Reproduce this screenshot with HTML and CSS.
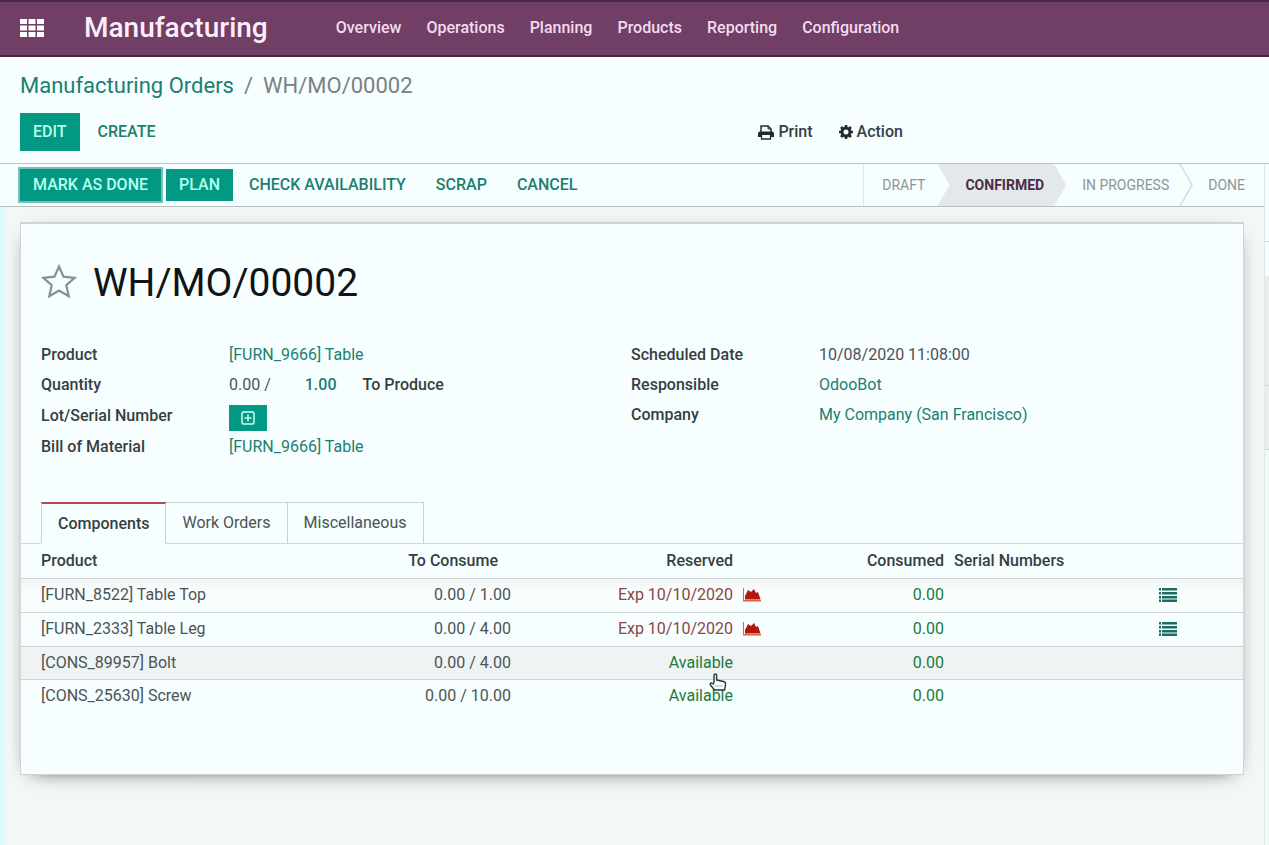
FILE: index.html
```html
<!DOCTYPE html>
<html lang="en">
<head>
<meta charset="utf-8">
<title>WH/MO/00002 - Manufacturing</title>
<link rel="stylesheet" href="styles.css">
</head>
<body>
<svg class="defs" aria-hidden="true">
  <symbol id="chart" viewBox="0 0 18 14"><path d="M0 0h1v12h17v1.500H0z" fill="#d8663c"/><path d="M2 11.500V8l3-6 3 2 3-3 2 4 2-1 2.500 7.500z" fill="#b3170f"/></symbol>
  <symbol id="list" viewBox="0 0 18 14"><path d="M0 0h2v2.500H0zM3 0h15v2.500H3zM0 4h2v2.500H0zM3 4h15v2.500H3zM0 8h2v2.500H0zM3 8h15v2.500H3zM0 11.500h2V14H0zM3 11.500h15V14H3z" fill="#1b6b62"/></symbol>
</svg>
<header class="navbar">
  <button class="apps" aria-label="Applications">
    <svg width="24" height="18" viewBox="0 0 24 18" fill="#fff"><path d="M0 0h7v5H0zM8.500 0h7v5h-7zM17 0h7v5h-7zM0 6.500h7v5H0zM8.500 6.500h7v5h-7zM17 6.500h7v5h-7zM0 13h7v5H0zM8.500 13h7v5h-7zM17 13h7v5h-7z"/></svg>
  </button>
  <a class="brand" href="#">Manufacturing</a>
  <nav class="menu">
    <a href="#">Overview</a><a href="#">Operations</a><a href="#">Planning</a><a href="#">Products</a><a href="#">Reporting</a><a href="#">Configuration</a>
  </nav>
</header>
<section class="control">
  <div class="crumbs"><a href="#">Manufacturing Orders</a><span>/</span><span>WH/MO/00002</span></div>
  <div class="tools">
    <div class="tools-left">
      <button class="btn primary edit">EDIT</button><button class="btn flat">CREATE</button>
    </div>
    <div class="tools-right">
      <button class="drop"><svg width="16" height="15" viewBox="0 0 16 15"><path d="M3 7V1h7l3 3v3" fill="none" stroke="#222c2e" stroke-width="1.500"/><path d="M10 1v3h3" fill="none" stroke="#222c2e"/><path d="M2 6.500h12q2 0 2 2V12h-3v-2H3v2H0V8.500q0-2 2-2z" fill="#222c2e"/><path d="M3.500 10v4h9v-4" fill="none" stroke="#222c2e" stroke-width="1.300"/></svg>Print</button>
      <button class="drop"><svg width="14" height="14" viewBox="0 0 14 14" fill="none" stroke="#222c2e"><circle cx="7" cy="7" r="4" stroke-width="3"/><path d="M7 0v2M7 12v2M0 7h2M12 7h2M2 2l1.500 1.500M10.500 10.500L12 12M12 2l-1.500 1.500M3.500 10.500L2 12" stroke-width="2.600"/></svg>Action</button>
    </div>
  </div>
</section>
<div class="content">
  <main class="form">
    <div class="statusbar">
      <div class="actions">
        <button class="btn primary focus">MARK AS DONE</button><button class="btn primary">PLAN</button><button class="btn flat">CHECK AVAILABILITY</button><button class="btn flat">SCRAP</button><button class="btn flat">CANCEL</button>
      </div>
      <ol class="steps">
        <li class="draft">DRAFT</li>
        <li class="current" aria-current="step">CONFIRMED</li>
        <li class="progress">IN PROGRESS<svg class="chevron" width="14" height="42" viewBox="0 0 14 42" fill="none" stroke="#d2dbde" stroke-width="1.500"><path d="M1 0l12 21L1 42"/></svg></li>
        <li class="done">DONE</li>
      </ol>
    </div>
    <div class="sheet-wrap">
      <article class="sheet">
        <div class="title">
          <button class="star" aria-label="Priority"><svg width="36" height="35" viewBox="0 0 36 35"><path d="M18 2.500l4.500 10.200 11.200 1.100-8.400 7.400 2.400 11L18 26.500l-9.700 5.700 2.400-11-8.400-7.400 11.200-1.100z" fill="none" stroke="#8b8f90" stroke-width="2.200"/></svg></button>
          <h1>WH/MO/00002</h1>
        </div>
        <div class="groups">
          <dl class="group">
            <dt>Product</dt><dd><a href="#">[FURN_9666] Table</a></dd>
            <dt>Quantity</dt><dd class="qty"><span>0.00 /</span><a href="#">1.00</a><b>To Produce</b></dd>
            <dt class="lot">Lot/Serial Number</dt><dd class="lot"><button class="plus" aria-label="Create lot"><svg width="14" height="14" viewBox="0 0 14 14" fill="none" stroke="#c9fff4"><rect x="1" y="1" width="12" height="12" rx="1.500" stroke-width="1.500"/><path d="M7 3.500v7M3.500 7h7" stroke-width="1.500"/></svg></button></dd>
            <dt>Bill of Material</dt><dd><a href="#">[FURN_9666] Table</a></dd>
          </dl>
          <dl class="group">
            <dt>Scheduled Date</dt><dd>10/08/2020 11:08:00</dd>
            <dt>Responsible</dt><dd><a href="#">OdooBot</a></dd>
            <dt>Company</dt><dd><a href="#">My Company (San Francisco)</a></dd>
          </dl>
        </div>
        <div class="tabs" role="tablist">
          <button class="tab active" role="tab" aria-selected="true">Components</button><button class="tab" role="tab">Work Orders</button><button class="tab" role="tab">Miscellaneous</button>
        </div>
        <table class="lines">
          <colgroup><col><col class="c-consume"><col class="c-reserved"><col class="c-chart"><col class="c-consumed"><col class="c-serial"><col class="c-list"></colgroup>
          <thead><tr><th>Product</th><th class="num sort">To Consume</th><th class="num">Reserved</th><th></th><th class="num">Consumed</th><th>Serial Numbers</th><th></th></tr></thead>
          <tbody>
            <tr><td>[FURN_8522] Table Top</td><td class="num">0.00 / 1.00</td><td class="num late">Exp 10/10/2020</td><td><svg class="icon"><use href="#chart"/></svg></td><td class="num ok">0.00</td><td></td><td><svg class="icon"><use href="#list"/></svg></td></tr>
            <tr><td>[FURN_2333] Table Leg</td><td class="num">0.00 / 4.00</td><td class="num late">Exp 10/10/2020</td><td><svg class="icon"><use href="#chart"/></svg></td><td class="num ok">0.00</td><td></td><td><svg class="icon"><use href="#list"/></svg></td></tr>
            <tr class="hover"><td>[CONS_89957] Bolt</td><td class="num">0.00 / 4.00</td><td class="num ok">Available<svg class="pointer" width="18" height="18" viewBox="0 0 18 18"><path d="M5 10V2.500Q5 1 6.300 1T7.600 2.500V7l7 1.500q2 .5 2 2.500l-1 6H5.500L1.500 12q-.8-1.500.5-2 1.200-.4 3 1.500" fill="#f7ffff" stroke="#26343a" stroke-width="1.400" stroke-linejoin="round"/><path d="M6 13h8" stroke="#a9b4b8"/></svg></td><td></td><td class="num ok">0.00</td><td></td><td></td></tr>
            <tr><td>[CONS_25630] Screw</td><td class="num">0.00 / 10.00</td><td class="num ok">Available</td><td></td><td class="num ok">0.00</td><td></td><td></td></tr>
          </tbody>
        </table>
      </article>
    </div>
  </main>
  <aside class="chatter"><div class="blank"></div><div class="day"></div><div class="note"></div></aside>
</div>
</body>
</html>
```
FILE: styles.css
```css
* { box-sizing: border-box; }
body {
  margin: 0;
  min-height: 100vh;
  display: flex;
  flex-direction: column;
  background: #f6feff;
  color: #4c5355;
  font: 16px/20px Roboto, "Liberation Sans", sans-serif;
}
a { color: #1b7f70; text-decoration: none; }
button { font: inherit; color: inherit; background: none; border: 0; padding: 0; }
svg { display: block; }
.defs { position: absolute; width: 0; height: 0; }

.navbar {
  display: flex;
  align-items: center;
  height: 57px;
  padding: 0 20px 2px;
  background: #713e66;
  border-top: 2px solid #46264f;
  border-bottom: 2px solid #50203f;
}
.brand { margin-left: 40px; color: #fdeefa; font-size: 28px; font-weight: 500; line-height: 32px; }
.menu { display: flex; gap: 25px; margin-left: 68px; }
.menu a { color: #f3dcee; font-weight: 500; }

.control { padding: 14px 20px 12px; border-bottom: 1px solid #b9c6cc; }
.crumbs { display: flex; gap: 10px; font-size: 22px; line-height: 30px; color: #7b8081; }
.tools { display: grid; grid-template-columns: 60% 1fr; align-items: center; margin-top: 12px; }
.tools-left { display: flex; align-items: center; }
.tools-right { display: flex; gap: 26px; padding-left: 1px; }
.drop { display: flex; align-items: center; gap: 4px; color: #364042; font-weight: 500; }
.btn { height: 32px; padding: 0 13px; font-weight: 500; }
.primary { background: #029883; color: #b6fff0; }
.flat { color: #1b7f70; padding: 0 14px; }
.edit { height: 38px; }
.tools .flat { padding: 0 18px; }

.content { display: flex; flex: 1; }
.form { flex: 1; display: flex; flex-direction: column; min-width: 0; }
.statusbar { display: flex; justify-content: space-between; height: 43px; border-bottom: 1px solid #b9bdbd; padding-left: 20px; }
.actions { display: flex; align-items: center; }
.actions .btn + .btn { margin-left: 2px; }
.actions .focus { margin-right: 3px; outline: 2px solid #7cbfb6; }
.steps { display: flex; margin: 0; padding: 0; list-style: none; font-size: 14px; line-height: 42px; color: #8d9598; border-left: 1px solid #e1e8ea; }
.draft { padding: 0 12px 0 18px; }
.current {
  padding: 0 22px 0 28px;
  background: #e3e8ea;
  color: #4d2c48;
  font-weight: 700;
  clip-path: polygon(0 0, calc(100% - 12px) 0, 100% 50%, calc(100% - 12px) 100%, 0 100%, 12px 50%);
}
.progress { position: relative; padding: 0 24px 0 16px; }
.chevron { position: absolute; top: 0; right: 0; }
.done { padding: 0 19px 0 15px; }

.sheet-wrap { flex: 1; padding: 15px 20px; background: linear-gradient(90deg, #d5faf8, #f3f7f6 8px, #f3f8f7); }
.sheet {
  min-height: 553px;
  background: #f6feff;
  border: 1px solid #d0d4d4;
  border-width: 2px 1px 1px;
  box-shadow: 0 5px 20px -12px #000;
}
.title { display: flex; align-items: center; gap: 16px; padding: 33px 20px 0; }
.star { padding-bottom: 2px; }
h1 { margin: 0; padding-top: 2px; color: #101415; font-size: 39px; font-weight: 400; line-height: 48px; }
.groups { display: grid; grid-template-columns: 590px 1fr; padding: 33px 20px 0; }
.group { display: grid; grid-template-columns: 188px 1fr; grid-auto-rows: min-content; margin: 0; line-height: 30px; }
dt, b { color: #363e40; font-weight: 500; }
dd { margin: 0; }
.qty { display: flex; }
.qty a { margin: 0 26px 0 34px; font-weight: 500; }
.lot { display: flex; align-items: center; height: 32px; }
.lot .plus { display: grid; place-items: center; width: 38px; height: 26px; margin-top: 3px; background: #029883; }

.tabs { display: flex; margin-top: 40px; padding-left: 20px; border-bottom: 1px solid #c5dde1; }
.tab { height: 42px; padding: 0 16px; margin-bottom: -1px; border: 1px solid #cbd1d3; border-left: 0; border-bottom-color: #c5dde1; }
.active { color: #363e40; background: #f6feff; border-left: 1px solid #cbd1d3; border-top: 2px solid #b54a4a; border-bottom-color: #f6feff; font-weight: 500; }

.lines { width: 100%; table-layout: fixed; border-collapse: collapse; }
.lines th, .lines td { height: 34px; padding: 0 5px; text-align: left; border-bottom: 1px solid #cfd4d5; }
.lines th { color: #363e40; font-weight: 500; }
.lines th:first-child, .lines td:first-child { padding-left: 20px; }
.lines tr:last-child td { border-bottom: 0; }
.lines thead th { border-bottom: 1px solid #cfd4d5; }
.lines tbody tr:first-child { background: linear-gradient(#f1f4f4, #f8fdfd 14px); }
.lines .hover { background: #eff3f4; }
.lines .hover td { height: 33px; }
.lines .num { position: relative; text-align: right; }
.lines .sort { padding-right: 18px; }
.lines .late { color: #8d4543; }
.lines .ok { color: #1c7a3c; }
.c-consume { width: 216px; }
.c-reserved { width: 222px; }
.c-chart { width: 27px; }
.c-consumed { width: 184px; }
.c-serial { width: 205px; }
.c-list { width: 89px; }
.icon { width: 18px; height: 14px; }
.pointer { position: absolute; right: 11px; bottom: -12px; z-index: 1; }

.chatter { width: 5px; border-left: 1px solid #e0e7e8; background: #f1f8f8; }
.blank { height: 78px; border-bottom: 1px solid #cfd6d8; background: #f6feff; }
.day { height: 144px; border-bottom: 1px solid #cfd6d8; background: linear-gradient(#f6feff 34px, #e9edec 34px); }
.note { height: 64px; background: #e9edec; border-bottom: 1px solid #cfd6d8; }
```
